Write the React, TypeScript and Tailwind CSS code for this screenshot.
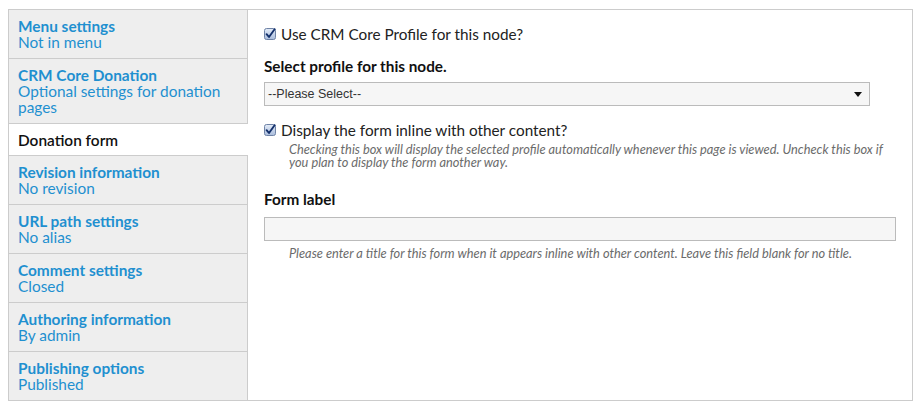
const tabs = [
  { title: "Menu settings", summary: "Not in menu" },
  { title: "CRM Core Donation", summary: "Optional settings for donation pages" },
  { title: "Donation form", active: true },
  { title: "Revision information", summary: "No revision" },
  { title: "URL path settings", summary: "No alias" },
  { title: "Comment settings", summary: "Closed" },
  { title: "Authoring information", summary: "By admin" },
  { title: "Publishing options", summary: "Published" },
];

const Check = () => (
  <svg width="12" height="12" viewBox="0 0 12 12" className="shrink-0">
    <defs>
      <linearGradient id="cb" x1="0" y1="0" x2="0" y2="1">
        <stop offset="0" stopColor="#e4ecf8" />
        <stop offset="1" stopColor="#a9bcdc" />
      </linearGradient>
    </defs>
    <rect x="0.5" y="0.5" width="11" height="11" rx="2" fill="url(#cb)" stroke="#6f83a6" />
    <path d="M2.6 6.2 L5 9 L10.6 1.2" fill="none" stroke="#13306b" strokeWidth="1.9" strokeLinecap="round" strokeLinejoin="round" />
  </svg>
);

export default function App() {
  return (
    <div className="w-[922px] h-[408px] bg-white pt-[9px] pl-2" style={{ fontFamily: "Lato, 'Open Sans', sans-serif" }}>
      <div className="flex w-[905px] h-[392px] border border-[#cccccc]">
        {/* Vertical tabs */}
        <ul className="w-[239px] shrink-0 flex flex-col">
          {tabs.map((t, i) => (
            <li
              key={t.title}
              className={
                (t.active
                  ? "bg-white pt-2 pb-[7px] "
                  : "bg-[#eeeeee] border-r border-[#cccccc] py-2 ") +
                "px-[9px] text-[15.4px] leading-4 " +
                (i < tabs.length - 1 ? "border-b border-[#cccccc] " : "grow ")
              }
            >
              {t.active ? (
                <div className="text-[#111] font-semibold">{t.title}</div>
              ) : (
                <>
                  <div className="text-[#1f90d0] font-bold">{t.title}</div>
                  <div className="text-[#1f90d0]">{t.summary}</div>
                </>
              )}
            </li>
          ))}
        </ul>

        {/* Pane */}
        <div className="flex-1 bg-white pl-4 pt-[16px] text-[#222]">
          <label className="flex items-center gap-[5px] text-[15.3px] leading-4">
            <Check />
            <span>Use CRM Core Profile for this node?</span>
          </label>

          <div className="mt-[16px] text-[15.3px] leading-4 font-bold text-[#111]">Select profile for this node.</div>
          <div className="mt-[8px] w-[606px] h-[24px] border border-[#bbbbbb] bg-[#f6f6f6] flex items-center justify-between pl-[3px] pr-[7px]">
            <span className="text-[12.5px] text-[#333]" style={{ fontFamily: "'Liberation Sans', Arial, sans-serif" }}>
              --Please Select--
            </span>
            <svg width="8" height="5" viewBox="0 0 8 5">
              <path d="M0 0 H8 L4 5 Z" fill="#111" />
            </svg>
          </div>

          <label className="mt-[16px] flex items-center gap-[5px] text-[15.3px] leading-4">
            <Check />
            <span>Display the form inline with other content?</span>
          </label>
          <p className="mt-[5px] ml-[25px] w-[612px] text-[12.8px] leading-[13px] italic text-[#6b6b6b]">
            Checking this box will display the selected profile automatically whenever this page is viewed. Uncheck this box if you plan to display the form another way.
          </p>

          <div className="mt-[22px] text-[15.3px] leading-4 font-bold text-[#111]">Form label</div>
          <div className="mt-[10px] w-[632px] h-[24px] border border-[#bbbbbb] bg-[#f6f6f6]" />
          <p className="mt-[6px] ml-[25px] text-[12.8px] leading-[13px] italic text-[#6b6b6b]">
            Please enter a title for this form when it appears inline with other content. Leave this field blank for no title.
          </p>
        </div>
      </div>
    </div>
  );
}
